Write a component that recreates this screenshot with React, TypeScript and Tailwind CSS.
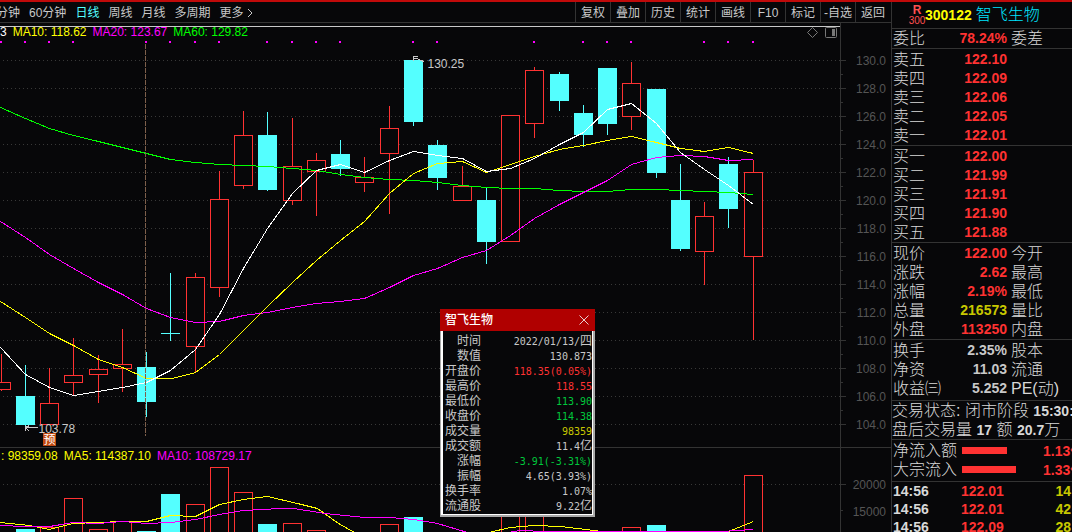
import React from 'react';
import clsx from 'clsx';

type Candle = {
  x: number;
  up: boolean;
  high: number;
  top: number;
  bottom: number;
  low: number;
  vol?: number;
};

// x is the wick, the body is 19px wide around it
const candles: Candle[] = [
  { x: 1, up: true, high: 353, top: 382, bottom: 389, low: 390 },
  { x: 25, up: false, high: 364, top: 396, bottom: 424, low: 427, vol: 529 },
  { x: 49, up: true, high: 367, top: 403, bottom: 424, low: 424, vol: 527 },
  { x: 73, up: true, high: 337, top: 375, bottom: 382, low: 394, vol: 498 },
  { x: 98, up: true, high: 354, top: 369, bottom: 374, low: 402, vol: 529 },
  { x: 122, up: true, high: 328, top: 364, bottom: 368, low: 391, vol: 521 },
  { x: 146, up: false, high: 351, top: 367, bottom: 401, low: 416, vol: 531 },
  { x: 170, up: false, high: 272, top: 333, bottom: 333, low: 340, vol: 494 },
  { x: 195, up: true, high: 272, top: 277, bottom: 346, low: 372, vol: 504 },
  { x: 219, up: true, high: 170, top: 199, bottom: 287, low: 296, vol: 467 },
  { x: 243, up: true, high: 110, top: 135, bottom: 185, low: 188, vol: 492 },
  { x: 267, up: false, high: 111, top: 135, bottom: 189, low: 190, vol: 524 },
  { x: 292, up: true, high: 117, top: 166, bottom: 200, low: 204, vol: 523 },
  { x: 316, up: true, high: 152, top: 160, bottom: 171, low: 215, vol: 530 },
  { x: 340, up: false, high: 139, top: 154, bottom: 168, low: 175 },
  { x: 364, up: true, high: 156, top: 177, bottom: 182, low: 191 },
  { x: 389, up: true, high: 105, top: 128, bottom: 153, low: 213, vol: 524 },
  { x: 413, up: false, high: 60, top: 60, bottom: 121, low: 125, vol: 517 },
  { x: 437, up: false, high: 139, top: 145, bottom: 177, low: 189 },
  { x: 462, up: true, high: 165, top: 186, bottom: 200, low: 200 },
  { x: 486, up: false, high: 186, top: 200, bottom: 241, low: 263 },
  { x: 510, up: true, high: 115, top: 115, bottom: 241, low: 241, vol: 505 },
  { x: 534, up: true, high: 66, top: 70, bottom: 123, low: 137, vol: 508 },
  { x: 559, up: false, high: 71, top: 74, bottom: 100, low: 110 },
  { x: 583, up: false, high: 104, top: 113, bottom: 134, low: 146 },
  { x: 607, up: false, high: 67, top: 68, bottom: 123, low: 134 },
  { x: 631, up: true, high: 61, top: 83, bottom: 116, low: 129, vol: 527 },
  { x: 656, up: false, high: 89, top: 89, bottom: 172, low: 177, vol: 525 },
  { x: 680, up: false, high: 163, top: 200, bottom: 248, low: 250, vol: 531 },
  { x: 704, up: true, high: 201, top: 216, bottom: 251, low: 284 },
  { x: 728, up: false, high: 156, top: 164, bottom: 208, low: 227 },
  { x: 753, up: true, high: 159, top: 172, bottom: 256, low: 339, vol: 475 },
];

const ma5 =
  '0,347 25,374 49,387 73,395 98,391 122,387 146,382 170,370 195,349 219,314 243,268 267,228 292,193 316,170 340,164 364,172 389,160 413,151 437,155 462,158 486,171 510,168 534,158 559,144 583,132 607,109 631,103 656,123 680,152 704,169 728,185 753,204';
const ma10 =
  '0,301 25,317 49,333 73,345 98,359 122,367 146,378 172,378 195,372 219,354 243,330 267,306 292,282 316,260 340,240 364,221 389,193 413,173 437,163 462,161 486,172 510,164 534,156 559,149 583,145 607,140 631,136 656,142 680,148 704,151 728,147 753,153';
const ma20 =
  '0,221 25,237 49,254 73,268 98,282 122,294 146,308 170,317 195,322 219,321 243,315 267,312 292,307 316,303 340,301 364,298 389,287 413,275 437,268 462,257 486,250 510,235 534,218 559,204 583,192 607,180 631,164 656,157 680,155 704,156 728,160 753,159';
const ma60 =
  '0,107 25,118 49,128 73,135 98,141 122,147 146,153 170,159 195,162 219,164 243,165 267,166 292,168 316,170 340,174 364,177 389,179 413,180 437,182 462,185 486,187 510,188 534,188 559,190 583,191 607,191 631,189 656,189 680,190 704,191 728,192 753,194';

const dots = [0, 24, 48, 72, 145, 169, 194, 218, 266, 291, 315, 339, 412, 436, 533, 582, 606, 630, 703, 727, 752];

const prices = ['130.0', '128.0', '126.0', '124.0', '122.0', '120.0', '118.0', '116.0', '114.0', '112.0', '110.0', '108.0', '106.0', '104.0'];

const periods = ['分钟', '60分钟', '日线', '周线', '月线', '多周期'];
const tools = ['复权', '叠加', '历史', '统计', '画线', 'F10', '标记', '-自选', '返回'];

const RED = 'text-[#ff3232]';
const GREY = 'text-[#c8c8c8]';
const OLIVE = 'text-[#c8c800]';
const GREEN = 'text-[#00c83c]';

type QuoteRow = { label: string; value: string; color: string; next?: string };

const sells: QuoteRow[] = [
  { label: '卖五', value: '122.10', color: RED },
  { label: '卖四', value: '122.09', color: RED },
  { label: '卖三', value: '122.06', color: RED },
  { label: '卖二', value: '122.05', color: RED },
  { label: '卖一', value: '122.01', color: RED },
];

const buys: QuoteRow[] = [
  { label: '买一', value: '122.00', color: RED },
  { label: '买二', value: '121.99', color: RED },
  { label: '买三', value: '121.91', color: RED },
  { label: '买四', value: '121.90', color: RED },
  { label: '买五', value: '121.88', color: RED },
];

const quote: QuoteRow[] = [
  { label: '现价', value: '122.00', color: RED, next: '今开' },
  { label: '涨跌', value: '2.62', color: RED, next: '最高' },
  { label: '涨幅', value: '2.19%', color: RED, next: '最低' },
  { label: '总量', value: '216573', color: OLIVE, next: '量比' },
  { label: '外盘', value: '113250', color: RED, next: '内盘' },
];

const basics: QuoteRow[] = [
  { label: '换手', value: '2.35%', color: GREY, next: '股本' },
  { label: '净资', value: '11.03', color: GREY, next: '流通' },
  { label: '收益㈢', value: '5.252', color: GREY, next: 'PE(动)' },
];

const ticks = [
  { time: '14:56', price: '122.01', vol: '14' },
  { time: '14:56', price: '122.01', vol: '42' },
  { time: '14:56', price: '122.09', vol: '28' },
];

const details = [
  { label: '时间', value: '2022/01/13/', unit: '四', color: GREY },
  { label: '数值', value: '130.873', color: GREY },
  { label: '开盘价', value: '118.35(0.05%)', color: RED },
  { label: '最高价', value: '118.55', color: RED },
  { label: '最低价', value: '113.90', color: GREEN },
  { label: '收盘价', value: '114.38', color: GREEN },
  { label: '成交量', value: '98359', color: OLIVE },
  { label: '成交额', value: '11.4', unit: '亿', color: GREY },
  { label: '涨幅', value: '-3.91(-3.31%)', color: GREEN },
  { label: '振幅', value: '4.65(3.93%)', color: GREY },
  { label: '换手率', value: '1.07%', color: GREY },
  { label: '流通股', value: '9.22', unit: '亿', color: GREY },
];

const Toolbar: React.FC = () => (
  <nav className="flex h-[21px] items-stretch justify-between overflow-hidden border-b border-[#333] pr-px text-xs leading-5 text-[#c8c8c8]">
    <div className="-ml-1 flex gap-[9px] pt-px whitespace-nowrap">
      {periods.map((p) => (
        <button key={p} className={clsx(p === '日线' && 'text-[#54ffff]')}>
          {p}
        </button>
      ))}
      <button className="flex items-center gap-1">
        更多
        <svg width="6" height="10" fill="none" stroke="currentColor">
          <path d="M1 1l4 4l-4 4" />
        </svg>
      </button>
    </div>
    <div className="flex">
      {tools.map((t) => (
        <button key={t} className="w-[35px] border-l border-[#333] pt-px text-center whitespace-nowrap">
          {t}
        </button>
      ))}
    </div>
  </nav>
);

const PriceChart: React.FC = () => (
  <svg className="block h-[407px] w-full" shapeRendering="crispEdges">
    <g transform="translate(0.5 -39.5)" fill="none">
      {prices.map((p, i) => (
        <line key={p} x1="2" x2="100%" y1={60 + i * 28} y2={60 + i * 28} stroke="#383838" strokeDasharray="1 3" />
      ))}
      {dots.map((x) => (
        <rect key={x} x={x - 0.5} y="40.5" width="2" height="2" fill="#ff00ff" />
      ))}
      {candles.map((c) =>
        c.up ? (
          <g key={c.x} stroke="#ff3232">
            <line x1={c.x} x2={c.x} y1={c.high} y2={c.low + 0.5} />
            <rect x={c.x - 9} y={c.top} width="18" height={c.bottom - c.top} fill="#070709" />
          </g>
        ) : (
          <g key={c.x} stroke="#54ffff">
            <line x1={c.x} x2={c.x} y1={c.high} y2={c.low + 0.5} />
            <rect x={c.x - 9.5} y={c.top - 0.5} width="19" height={c.bottom - c.top + 1} fill="#54ffff" stroke="none" />
          </g>
        ),
      )}
      <polyline points={ma60} stroke="#00ff00" />
      <polyline points={ma20} stroke="#ff00ff" />
      <polyline points={ma10} stroke="#ffff00" />
      <polyline points={ma5} stroke="#ffffff" />
      <line x1="145" x2="145" y1="43" y2="435" stroke="#7d5f4b" strokeDasharray="5 1" />

      {/* high / low markers */}
      <path d="M413 60v-4h4M413 58h4l3 2l4 1" stroke="#c8c8c8" />
      <path d="M25 427h12M25 427l4 4M25 427l4-2M25 425v5" stroke="#c8c8c8" />
      <text x="427" y="67" fill="#c8c8c8" fontSize="12">130.25</text>
      <text x="38" y="432" fill="#c8c8c8" fontSize="12">103.78</text>
      <rect x="42.5" y="432.5" width="13" height="13" fill="#c04a10" />
      <text x="43" y="443" fill="#ffffff" fontSize="12">预</text>
    </g>
  </svg>
);

const VolumeChart: React.FC = () => (
  <svg className="block h-[68px] w-full" shapeRendering="crispEdges">
    <g transform="translate(0.5 -463.5)" fill="none">
      <line x1="2" x2="100%" y1="484" y2="484" stroke="#383838" strokeDasharray="1 3" />
      {candles
        .filter((c) => c.vol)
        .map((c) => (
          <rect
            key={c.x}
            x={c.x - 9}
            y={c.vol}
            width="18"
            height="90"
            fill={c.up ? '#070709' : '#54ffff'}
            stroke={c.up ? '#ff3232' : '#54ffff'}
          />
        ))}
      <g stroke="#ffff00">
        <polyline points="0,522 29,525 49,529 72,523 98,522 122,521 146,521 170,515 195,516 219,504 243,499 267,496 297,503 317,508 338,523 354,532" />
        <polyline points="488,532 510,527 534,525 560,526 602,531 622,533" />
        <polyline points="728,531 753,521" />
      </g>
      <g stroke="#ff00ff">
        <polyline points="0,525 25,526 49,526 73,522 98,523 122,521 146,523 170,522 195,519 219,514 243,510 280,508 293,508 325,513 364,517 389,517 413,519 437,523 467,532" />
        <polyline points="507,532 520,530 545,531 720,531 753,529" />
      </g>
    </g>
  </svg>
);

const PriceAxis: React.FC = () => (
  <div className="flex w-[51px] border-l border-[#333] text-xs text-[#555]">
    <svg width="5" height="424" shapeRendering="crispEdges" fill="#333">
      {prices.map((p, i) => (
        <g key={p}>
          <rect x="0" y={37 + i * 28} width="5" height="1" />
          {i < 13 && <rect x="0" y={51 + i * 28} width="2" height="1" />}
        </g>
      ))}
    </svg>
    <div className="flex-1 pt-6 pr-[5px] text-right">
      {prices.map((p) => (
        <div key={p} className="h-7 leading-7">{p}</div>
      ))}
    </div>
  </div>
);

const VolumeAxis: React.FC = () => (
  <div className="flex w-[51px] border-l border-[#333] text-xs text-[#555]">
    <svg width="5" height="84" shapeRendering="crispEdges" fill="#333">
      <rect x="0" y="36" width="5" height="1" />
      <rect x="0" y="62" width="2" height="1" />
    </svg>
    <div className="flex-1 pt-6 pr-[5px] text-right">
      <div className="h-[27px] leading-[27px]">20000</div>
      <div className="h-[27px] leading-[27px]">15000</div>
      <div className="h-[27px] leading-[27px]">10000</div>
    </div>
  </div>
);

const DetailPopup: React.FC = () => (
  <section className="absolute top-[307px] left-[440px] w-[155px]">
    <header className="flex h-[22px] items-center justify-between bg-[#b00000] pr-[6px] pl-[5px] text-xs font-medium text-white">
      <h2>智飞生物</h2>
      <button aria-label="关闭">
        <svg className="block" width="10" height="10" stroke="#e6d0d0">
          <path d="M.5 .5l9 9M9.500 .5l-9 9" />
        </svg>
      </button>
    </header>
    <div className="border-r-2 border-b-2 border-l border-[#a8a8a8]">
      <div className="border-r border-b border-l-2 border-white bg-[#070709] pt-[3px]">
        <table className="w-full border-collapse">
          <tbody>
            {details.map((d) => (
              <tr key={d.label} className="h-[15px]">
                <th className="w-[38px] p-0 text-right text-xs leading-[15px] font-normal whitespace-nowrap text-[#c8c8c8]">
                  {d.label}
                </th>
                <td
                  className={clsx(
                    "p-0 text-right font-['DejaVu_Sans_Mono','Noto_Sans_CJK_SC',monospace] text-[10px] leading-[15px] whitespace-nowrap",
                    d.color,
                  )}
                >
                  {d.value}
                  {d.unit && <span className="text-xs leading-none">{d.unit}</span>}
                </td>
              </tr>
            ))}
          </tbody>
        </table>
      </div>
    </div>
  </section>
);

const QuoteTable: React.FC<{ rows: QuoteRow[] }> = ({ rows }) => (
  <table className="w-full table-fixed border-collapse">
    <colgroup>
      <col className="w-[60px]" />
      <col className="w-[56px]" />
      <col />
    </colgroup>
    <tbody>
      {rows.map((r) => (
        <tr key={r.label} className="h-[19px] leading-[19px] whitespace-nowrap">
          <th className="p-0 pl-px text-left text-base leading-[19px] font-light">{r.label}</th>
          <td className={clsx('p-0 pr-px text-right text-sm leading-[19px] font-bold', r.color)}>
            {r.value}
          </td>
          <td className="p-0 pl-[3px] text-base leading-[19px] font-light">{r.next}</td>
        </tr>
      ))}
    </tbody>
  </table>
);

const Sidebar: React.FC = () => (
  <aside className="w-[181px] shrink-0 overflow-hidden border-l border-[#333] text-base font-light whitespace-nowrap text-[#d8d8d8]">
    <header className="flex h-[27px] items-center border-b border-[#333] pl-[17px]">
      <div className="flex w-4 flex-col items-center text-[#ff5050]">
        <span className="text-xs leading-[11px] font-bold">R</span>
        <span className="text-[10px] leading-[9px]">300</span>
      </div>
      <span className="text-sm font-bold text-[#ffff00]">300122</span>
      <h1 className="pl-1 text-[#00e5ff]">智飞生物</h1>
    </header>
    <div className="border-b border-[#333]">
      <QuoteTable rows={[{ label: '委比', value: '78.24%', color: RED, next: '委差' }]} />
    </div>
    <div className="border-b border-[#333] pt-px">
      <QuoteTable rows={sells} />
    </div>
    <div className="border-b border-[#333] pt-px">
      <QuoteTable rows={buys} />
    </div>
    <div className="border-b border-[#333] pt-px">
      <QuoteTable rows={quote} />
    </div>
    <div className="border-b border-[#333] pt-px pb-[2px]">
      <QuoteTable rows={basics} />
    </div>
    <div className="border-b border-[#333] leading-[19px]">
      <p>
        交易状态: 闭市阶段 <b className="text-sm leading-none font-bold">15:30:00</b>
      </p>
      <p>
        盘后交易量 <b className="text-sm leading-none font-bold">17</b> 额{' '}
        <b className="text-sm leading-none font-bold">20.7</b>万
      </p>
    </div>
    <div className="border-b border-[#333] pt-px pb-[2px] leading-[19px]">
      <div className="flex h-[19px] items-center pl-px">
        <span className="w-[69px]">净流入额</span>
        <span className="h-[7px] w-[45px] bg-[#ff3232]" />
        <b className="ml-auto w-[29px] text-sm font-bold text-[#ff3232]">1.13亿</b>
      </div>
      <div className="flex h-[19px] items-center pl-px">
        <span className="w-[69px]">大宗流入</span>
        <span className="h-[7px] w-[54px] bg-[#ff3232]" />
        <b className="ml-auto w-[29px] text-sm font-bold text-[#ff3232]">1.33亿</b>
      </div>
    </div>
    <table className="w-full table-fixed border-collapse text-sm font-bold">
      <tbody>
        {ticks.map((t, i) => (
          <tr key={i} className="h-[18px] leading-[18px]">
            <td className="w-[69px] p-0 pl-px">{t.time}</td>
            <td className="p-0 text-[#ff3232]">{t.price}</td>
            <td className="w-[40px] p-0 pr-px text-right text-[#c8c800]">{t.vol}</td>
          </tr>
        ))}
      </tbody>
    </table>
  </aside>
);

const App: React.FC = () => {
  return (
    <div className="flex h-screen overflow-hidden border-t-2 border-[#c00a0a] bg-[#070709] font-['Liberation_Sans','Noto_Sans_CJK_SC',sans-serif]">
      <main className="relative min-w-0 flex-1">
        <Toolbar />

        {/* K line */}
        <div className="flex border-b border-[#333]">
          <div className="min-w-0 flex-1 pt-[3px]">
            <div className="flex h-[14px] justify-between border-t border-[#c8c8c8] text-xs leading-[11px]">
              <div className="flex gap-[6px] whitespace-nowrap">
                <span className="text-white">3</span>
                <span className="text-[#ffff00]">MA10: 118.62</span>
                <span className="text-[#ff00ff]">MA20: 123.67</span>
                <span className="text-[#00ff00]">MA60: 129.82</span>
              </div>
              <svg width="34" height="12" fill="none" stroke="#777">
                <path d="M6.500 .5l5 5l-5 5l-5-5z" />
                <rect x="19.500" y=".5" width="11" height="10" rx="1" />
                <rect x="26" y="2" width="3" height="7" fill="#777" stroke="none" />
              </svg>
            </div>
            <PriceChart />
          </div>
          <PriceAxis />
        </div>

        {/* Volume */}
        <div className="flex">
          <div className="min-w-0 flex-1">
            <div className="flex h-4 gap-[6px] pl-px text-xs leading-4 whitespace-nowrap">
              <span className="text-[#ffff00]">: 98359.08</span>
              <span className="text-[#ffff00]">MA5: 114387.10</span>
              <span className="text-[#ff00ff]">MA10: 108729.17</span>
            </div>
            <VolumeChart />
          </div>
          <VolumeAxis />
        </div>

        <DetailPopup />
      </main>
      <Sidebar />
    </div>
  );
};

export default App;
